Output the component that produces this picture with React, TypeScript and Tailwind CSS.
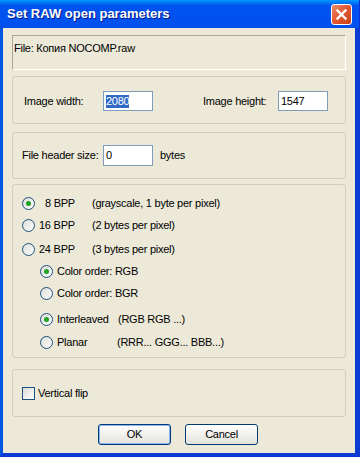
import React from 'react';

function Radio({ checked }: { checked?: boolean }) {
  return (
    <span className="w-[13px] h-[13px] rounded-full border border-[#1c5180] bg-gradient-to-br from-[#dcdcd7] to-white flex items-center justify-center shrink-0">
      {checked && <span className="w-[5px] h-[5px] rounded-full bg-[#21a121]" />}
    </span>
  );
}

function Field({ value, selected, h = 'h-[20px]' }: { value: string; selected?: boolean; h?: string }) {
  return (
    <div className={`w-[50px] ${h} border border-[#7f9db9] bg-white flex items-center px-[2px] shrink-0`}>
      <span className={selected ? 'bg-[#316ac5] text-white leading-[13px]' : 'leading-[13px]'}>{value}</span>
    </div>
  );
}

function Group({ className, children }: { className: string; children: React.ReactNode }) {
  return <div className={`mx-[9px] rounded-[3px] border border-[#d0d0bf] ${className}`}>{children}</div>;
}

export default function App() {
  return (
    <div
      className="w-[360px] h-[457px] flex flex-col text-[11px] tracking-[-0.25px] text-black"
      style={{ fontFamily: '"Liberation Sans", Arial, sans-serif' }}
    >
      <div className="h-[28px] flex items-center justify-between pl-[7px] pr-[7px] bg-gradient-to-b from-[#0997ff] via-[#0053ee] via-[20%] to-[#0050ee] border-r-[1px] border-[#0831d9]">
        <span className="text-white font-bold text-[13px] tracking-normal [text-shadow:1px_1px_#0a1883]">Set RAW open parameters</span>
        <span className="w-[21px] h-[21px] rounded-[3px] border border-white bg-gradient-to-br from-[#e8896a] via-[#e2562f] to-[#c84119] flex items-center justify-center">
          <svg width="13" height="13" viewBox="0 0 13 13">
            <path d="M2.5 2.5 L10.5 10.5 M10.5 2.5 L2.5 10.5" stroke="white" strokeWidth="2.4" strokeLinecap="square" />
          </svg>
        </span>
      </div>
      <div className="flex-1 flex flex-col bg-[#ece9d8] border-l-[3px] border-r-[5px] border-b-[4px] border-l-[#0055e5] border-r-[#0b3bd0] border-b-[#0b3bd0]">
        <div className="mt-[7px] mx-[9px] h-[35px] border-t border-l border-t-[#aca899] border-l-[#aca899] border-b border-r border-b-white border-r-white px-[1px] pt-[4px]">
          File: Копия NOCOMP.raw
        </div>

        <Group className="mt-[6px] h-[48px] pt-[14px] pl-[11px] pr-[17px]">
          <div className="flex items-center">
            <span className="w-[79px]">Image width:</span>
            <Field value="2080" selected />
            <span className="flex-1" />
            <span className="w-[75px]">Image height:</span>
            <Field value="1547" />
          </div>
        </Group>

        <Group className="mt-[8px] h-[47px] pt-[12px] pl-[9px]">
          <div className="flex items-center">
            <span className="w-[81px]">File header size:</span>
            <Field value="0" h="h-[21px]" />
            <span className="ml-[7px]">bytes</span>
          </div>
        </Group>

        <Group className="mt-[5px] h-[174px] pt-[12px] pl-[9px] flex flex-col">
          <div className="flex items-center h-[13px]">
            <Radio checked />
            <span className="ml-[4px] w-[53px] pl-[6px]">8 BPP</span>
            <span>(grayscale, 1 byte per pixel)</span>
          </div>
          <div className="flex items-center h-[13px] mt-[9px]">
            <Radio />
            <span className="ml-[4px] w-[53px]">16 BPP</span>
            <span>(2 bytes per pixel)</span>
          </div>
          <div className="flex items-center h-[13px] mt-[11px]">
            <Radio />
            <span className="ml-[4px] w-[53px]">24 BPP</span>
            <span>(3 bytes per pixel)</span>
          </div>
          <div className="flex items-center h-[13px] mt-[9px] ml-[18px]">
            <Radio checked />
            <span className="ml-[4px]">Color order: RGB</span>
          </div>
          <div className="flex items-center h-[13px] mt-[9px] ml-[18px]">
            <Radio />
            <span className="ml-[4px]">Color order: BGR</span>
          </div>
          <div className="flex items-center h-[13px] mt-[13px] ml-[18px]">
            <Radio checked />
            <span className="ml-[4px] w-[61px]">Interleaved</span>
            <span>(RGB RGB ...)</span>
          </div>
          <div className="flex items-center h-[13px] mt-[10px] ml-[18px]">
            <Radio />
            <span className="ml-[4px] w-[60px]">Planar</span>
            <span>(RRR... GGG... BBB...)</span>
          </div>
        </Group>

        <Group className="mt-[11px] h-[48px] pt-[17px] pl-[9px]">
          <div className="flex items-center h-[13px]">
            <span className="w-[13px] h-[13px] border border-[#1c5180] bg-gradient-to-br from-[#dcdcd7] to-white shrink-0" />
            <span className="ml-[3px]">Vertical flip</span>
          </div>
        </Group>

        <div className="mt-[7px] flex pl-[95px] gap-[14px]">
          <button className="w-[73px] h-[21px] rounded-[3px] border border-[#003c74] bg-gradient-to-b from-white to-[#e3e2da] shadow-[inset_0_0_0_1px_#8cb4f2] flex items-center justify-center">
            OK
          </button>
          <button className="w-[73px] h-[21px] rounded-[3px] border border-[#003c74] bg-gradient-to-b from-white to-[#e3e2da] flex items-center justify-center">
            Cancel
          </button>
        </div>
      </div>
    </div>
  );
}
